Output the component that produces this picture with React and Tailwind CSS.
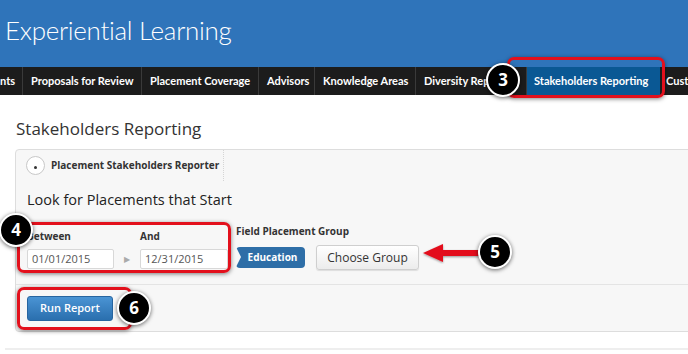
import React from 'react';

const font = { fontFamily: '"Open Sans", "Liberation Sans", sans-serif' };
const lato = { fontFamily: 'Lato, "Liberation Sans", sans-serif' };

const navItems = [
  { label: 'nts', w: 'w-[23px] pl-0' },
  { label: 'Proposals for Review', w: 'w-[119px] pl-[8px]' },
  { label: 'Placement Coverage', w: 'w-[117px] pl-[8px]' },
  { label: 'Advisors', w: 'w-[56px] pl-[8px]' },
  { label: 'Knowledge Areas', w: 'w-[101px] pl-[8px]' },
  { label: 'Diversity Reports', w: 'w-[111px] pl-[8px]' },
];

const Badge = ({ n, className }) => (
  <div
    className={`absolute w-[34px] h-[34px] rounded-full bg-black border-[2.5px] border-white shadow-[0_1px_4px_rgba(0,0,0,0.6)] flex items-center justify-center text-white text-[17px] font-bold ${className}`}
  >
    {n}
  </div>
);

const App = () => {
  return (
    <div className="relative w-[688px] h-[354px] overflow-hidden bg-white" style={font}>
      <div className="h-[67px] bg-[#2f74ba] pl-[5px] pt-[11px]">
        <h1 className="text-[26px] font-light text-white tracking-[-0.3px]" style={lato}>Experiential Learning</h1>
      </div>

      <nav className="h-[28px] bg-[#1c1c1c] flex items-stretch whitespace-nowrap" style={lato}>
        {navItems.map((item) => (
          <div
            key={item.label}
            className={`shrink-0 flex items-center overflow-hidden text-[11px] font-bold text-white border-r border-[#3a3a3a] ${item.w}`}
          >
            {item.label}
          </div>
        ))}
        <div className="shrink-0 w-[133px] flex items-center pl-[7px] bg-[#0a5894] text-[11px] font-bold text-white">Stakeholders Reporting</div>
        <div className="shrink-0 flex items-center pl-[6px] text-[11px] font-bold text-white">Custom</div>
      </nav>

      <div className="pl-[16px] pt-[21px] text-[17px] text-[#333]">Stakeholders Reporting</div>

      <div className="ml-[15px] mt-[7px] w-[700px] h-[183px] border border-[#dddddd] rounded-[4px] bg-[#f7f7f7] flex flex-col">
        <div className="h-[31px] flex">
          <div className="flex items-center gap-[6px] pl-[10px] pr-[4px] border-r border-dotted border-[#d5d5d5]">
            <div className="w-[19px] h-[19px] rounded-full border border-[#c8c8c8] bg-white flex items-end justify-center pb-[5px]">
              <div className="w-[3px] h-[3px] rounded-full bg-[#333]" />
            </div>
            <span className="text-[10px] font-bold text-[#333]">Placement Stakeholders Reporter</span>
          </div>
        </div>

        <div className="pl-[11px] pt-[8px] flex-1">
          <div className="text-[14.5px] text-[#222]">Look for Placements that Start</div>
          <div className="flex mt-[14px] items-end">
            <div className="flex flex-col">
              <span className="text-[10px] font-bold text-[#333] mb-[5px]">Between</span>
              <div className="w-[87px] h-[20px] bg-white border border-[#d8d8d8] rounded-[2px] text-[11px] text-[#555] pl-[4px] flex items-center">01/01/2015</div>
            </div>
            <div className="w-[26px] h-[20px] flex items-center justify-center text-[8px] text-[#aaa]">▶</div>
            <div className="flex flex-col">
              <span className="text-[10px] font-bold text-[#333] mb-[5px]">And</span>
              <div className="w-[88px] h-[20px] bg-white border border-[#d8d8d8] rounded-[2px] text-[11px] text-[#555] pl-[4px] flex items-center">12/31/2015</div>
            </div>
            <div className="flex flex-col ml-[8px]">
              <span className="text-[10px] font-bold text-[#333] mb-[6px]">Field Placement Group</span>
              <div className="flex items-center gap-[11px] mb-[-1px]">
                <div className="relative w-[69px] h-[21px] bg-[#2e6ea7] rounded-[4px] text-white text-[10px] font-bold flex items-center justify-center pl-[4px]">
                  <div className="absolute left-0 top-0 w-0 h-0 border-y-[10.5px] border-y-transparent border-l-[5px] border-l-[#f7f7f7]" />
                  Education
                </div>
                <div className="w-[103px] h-[25px] rounded-[3px] border border-[#cfcfcf] bg-gradient-to-b from-white to-[#ececec] shadow-[0_1px_1px_rgba(0,0,0,0.1)] text-[12px] text-[#333] flex items-center justify-center">
                  Choose Group
                </div>
              </div>
            </div>
          </div>
        </div>

        <div className="h-[47px] border-t border-[#e4e4e4] pl-[11px] pt-[11px]">
          <div className="w-[86px] h-[25px] rounded-[3px] bg-gradient-to-b from-[#4a94d4] to-[#2a6fae] border border-[#2765a0] text-white text-[11px] font-semibold flex items-center justify-center">
            Run Report
          </div>
        </div>
      </div>

      <div className="ml-[5px] mt-[16px] h-[2px] bg-[#eeeeee]" />

      {/* annotations */}
      <div className="absolute left-[507px] top-[57px] w-[158px] h-[41px] border-[3px] border-[#e3101c] rounded-[7px] shadow-[0_1px_4px_rgba(0,0,0,0.5)]" />
      <Badge n="3" className="left-[486px] top-[63px]" />

      <div className="absolute left-[17px] top-[222px] w-[214px] h-[51px] border-[3px] border-[#e3101c] rounded-[7px] shadow-[0_1px_4px_rgba(0,0,0,0.5)]" />
      <Badge n="4" className="left-[-1px] top-[213px]" />

      <svg className="absolute left-[421px] top-[242px]" width="62" height="22" viewBox="0 0 62 22">
        <defs>
          <filter id="s" x="-20%" y="-50%" width="140%" height="200%">
            <feDropShadow dx="0" dy="1" stdDeviation="1" floodOpacity="0.4" />
          </filter>
        </defs>
        <path d="M2 11 L22 2 L22 8 L60 8 L60 14 L22 14 L22 20 Z" fill="#e3101c" filter="url(#s)" />
      </svg>
      <Badge n="5" className="left-[478px] top-[235px]" />

      <div className="absolute left-[17px] top-[287px] w-[115px] h-[43px] border-[3px] border-[#e3101c] rounded-[7px] shadow-[0_1px_4px_rgba(0,0,0,0.5)]" />
      <Badge n="6" className="left-[117px] top-[291px]" />
    </div>
  );
};

export default App;
